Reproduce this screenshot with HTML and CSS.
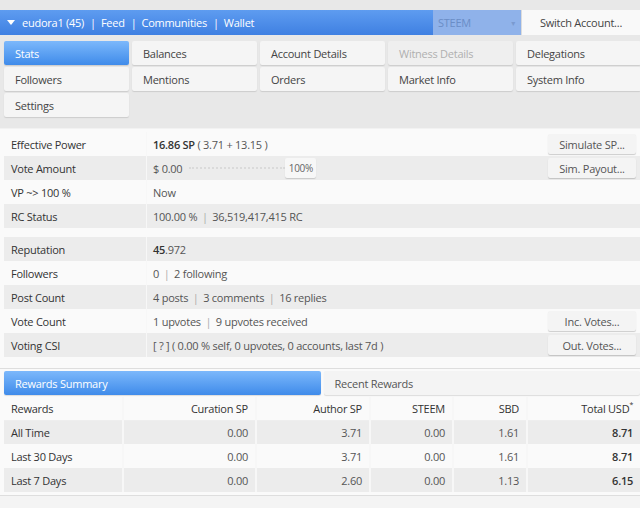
FILE: index.html
```html
<!DOCTYPE html>
<html>
<head>
<meta charset="utf-8">
<link rel="stylesheet" href="styles.css">
</head>
<body>
<div class="topbar">
  <div class="nav">
    <span class="caret"></span>
    <span class="link">eudora1 (45)</span><span class="sep">|</span>
    <span class="link">Feed</span><span class="sep">|</span>
    <span class="link">Communities</span><span class="sep">|</span>
    <span class="link">Wallet</span>
  </div>
  <div class="select"><span>STEEM</span><span class="arrow">▾</span></div>
  <div class="switch">Switch Account...</div>
</div>

<div class="tabs">
  <div class="tab active">Stats</div>
  <div class="tab">Balances</div>
  <div class="tab">Account Details</div>
  <div class="tab disabled">Witness Details</div>
  <div class="tab">Delegations</div>
  <div class="tab">Followers</div>
  <div class="tab">Mentions</div>
  <div class="tab">Orders</div>
  <div class="tab">Market Info</div>
  <div class="tab">System Info</div>
  <div class="tab">Settings</div>
</div>

<div class="panel stats">
  <div class="group">
    <div class="row">
      <div class="label">Effective Power</div>
      <div class="value"><b>16.86 SP</b> ( 3.71 + 13.15 )</div>
      <div class="act"><span class="btn">Simulate SP...</span></div>
    </div>
    <div class="row alt">
      <div class="label">Vote Amount</div>
      <div class="value"><span>$ 0.00</span><span class="slider"></span><span class="pct">100%</span></div>
      <div class="act"><span class="btn">Sim. Payout...</span></div>
    </div>
    <div class="row">
      <div class="label">VP ~&gt; 100 %</div>
      <div class="value">Now</div>
    </div>
    <div class="row alt">
      <div class="label">RC Status</div>
      <div class="value">100.00 % <span class="bar">|</span> 36,519,417,415 RC</div>
    </div>
  </div>
  <div class="group">
    <div class="row alt">
      <div class="label">Reputation</div>
      <div class="value"><b>45</b>.972</div>
    </div>
    <div class="row">
      <div class="label">Followers</div>
      <div class="value">0 <span class="bar">|</span> 2 following</div>
    </div>
    <div class="row alt">
      <div class="label">Post Count</div>
      <div class="value">4 posts <span class="bar">|</span> 3 comments <span class="bar">|</span> 16 replies</div>
    </div>
    <div class="row">
      <div class="label">Vote Count</div>
      <div class="value">1 upvotes <span class="bar">|</span> 9 upvotes received</div>
      <div class="act"><span class="btn">Inc. Votes...</span></div>
    </div>
    <div class="row alt">
      <div class="label">Voting CSI</div>
      <div class="value">[ ? ] ( 0.00 % self, 0 upvotes, 0 accounts, last 7d )</div>
      <div class="act"><span class="btn">Out. Votes...</span></div>
    </div>
  </div>
</div>

<div class="panel rewards">
  <div class="rtabs">
    <div class="rtab active">Rewards Summary</div>
    <div class="rtab">Recent Rewards</div>
  </div>
  <table class="rtable">
    <thead>
      <tr><th class="first">Rewards</th><th>Curation SP</th><th>Author SP</th><th>STEEM</th><th>SBD</th><th>Total USD<sup>*</sup></th></tr>
    </thead>
    <tbody>
      <tr class="alt"><td class="first">All Time</td><td>0.00</td><td>3.71</td><td>0.00</td><td>1.61</td><td class="total">8.71</td></tr>
      <tr><td class="first">Last 30 Days</td><td>0.00</td><td>3.71</td><td>0.00</td><td>1.61</td><td class="total">8.71</td></tr>
      <tr class="alt"><td class="first">Last 7 Days</td><td>0.00</td><td>2.60</td><td>0.00</td><td>1.13</td><td class="total">6.15</td></tr>
    </tbody>
  </table>
</div>
<div class="panel tail"></div>
</body>
</html>
```

FILE: styles.css
```css
* { box-sizing: border-box; }
html, body { margin: 0; padding: 0; }
body {
  background: #e8e8e8;
  font-family: "Open Sans", "DejaVu Sans", sans-serif;
  font-size: 11px;
  letter-spacing: -0.25px;
  color: #333;
  width: 640px;
  height: 508px;
  overflow: hidden;
}

/* top bar */
.topbar {
  margin-top: 10px;
  height: 25px;
  display: flex;
}
.nav {
  flex: 1;
  display: flex;
  align-items: center;
  padding-left: 7px;
  background: linear-gradient(#5e9cf0, #3f80e2);
  color: #fff;
  font-size: 11px;
}
.caret {
  width: 0; height: 0;
  border-left: 4px solid transparent;
  border-right: 4px solid transparent;
  border-top: 5px solid #fff;
  margin-right: 7px;
}
.sep { margin: 0 5px 0 6px; }
.select {
  width: 88px;
  background: #8fb2ea;
  color: #6a8dc6;
  font-size: 11px;
  display: flex;
  align-items: center;
  justify-content: space-between;
  padding: 0 6px 0 5px;
}
.select .arrow { font-size: 8px; color: #7a9ad0; }
.switch {
  width: 119px;
  background: #f9f9f9;
  color: #444;
  display: flex;
  align-items: center;
  justify-content: center;
  border-left: 1px solid #dcdcdc;
}

/* tabs */
.tabs {
  display: grid;
  grid-template-columns: repeat(5, 125px);
  grid-auto-rows: 24px;
  column-gap: 3px;
  row-gap: 2px;
  padding: 6px 0 0 4px;
}
.tab {
  background: #f5f5f5;
  color: #444;
  padding-left: 11px;
  display: flex;
  align-items: center;
  border-radius: 2px;
  box-shadow: 0 1px 1px rgba(0,0,0,0.12);
}
.tab.active {
  background: linear-gradient(#7cb8fb, #3f8bea);
  color: #fff;
}
.tab.disabled { color: #b0b0b0; background: #efefef; }

/* panels */
.panel {
  background: #fafafa;
}
.stats {
  margin-top: 11px;
  border-top: 1px solid #f2f2f2;
  padding: 3px 0 11px 4px;
}
.group + .group { margin-top: 9px; }
.row {
  display: flex;
  height: 24px;
  align-items: center;
}
.row.alt { background: #ececec; }
.label {
  width: 143px;
  padding-left: 7px;
  color: #333;
  height: 100%;
  display: flex;
  align-items: center;
  border-right: 1px solid #f7f7f7;
}
.value {
  flex: 1;
  padding-left: 6px;
  color: #555;
  display: flex;
  align-items: center;
  white-space: pre;
}
.value b { color: #333; font-weight: 600; }
.bar { color: #aaa; margin: 0 2px; }
.slider {
  width: 96px;
  margin-left: 7px;
  border-top: 2px dotted #dadada;
  height: 0;
}
.pct {
  font-size: 10px;
  color: #666;
  background: #f7f7f7;
  width: 31px;
  justify-content: center;
  height: 20px;
  display: flex;
  align-items: center;
  box-shadow: 0 1px 1px rgba(0,0,0,0.15);
  border-radius: 2px;
}
.act { padding-right: 4px; }
.btn {
  display: flex;
  align-items: center;
  justify-content: center;
  width: 88px;
  height: 20px;
  background: #f4f4f4;
  color: #555;
  font-size: 11px;
  border-radius: 2px;
  box-shadow: 0 1px 1px rgba(0,0,0,0.18);
}

/* rewards */
.rewards {
  border-top: 1px solid #dedede;
  padding: 2px 0 3px 4px;
  border-bottom: 1px solid #dedede;
}
.rtabs {
  display: flex;
  gap: 3px;
  height: 24px;
}
.rtab {
  flex: 1;
  background: #f4f4f4;
  color: #555;
  padding-left: 11px;
  display: flex;
  align-items: center;
  border-radius: 2px;
  box-shadow: 0 1px 1px rgba(0,0,0,0.12);
}
.rtab.active {
  background: linear-gradient(#7cb8fb, #3f8bea);
  color: #fff;
}
.rtable {
  margin-top: 2px;
  width: 636px;
  border-collapse: collapse;
  table-layout: fixed;
}
.rtable th, .rtable td {
  height: 24px;
  padding: 0 7px;
  text-align: right;
  font-weight: normal;
  border-left: 2px solid #f7f7f7;
  color: #555;
}
.rtable th { color: #333; background: #fafafa; border-bottom: 1px solid #eee; height: 23px; }
.rtable .first { text-align: left; border-left: none; color: #333; }
.rtable tr.alt td { background: #ececec; }
.rtable td.total { color: #333; font-weight: 600; }
.rtable th:nth-child(1) { width: 119px; }
.rtable th:nth-child(2) { width: 133px; }
.rtable th:nth-child(3) { width: 114px; }
.rtable th:nth-child(4) { width: 83px; }
.rtable th:nth-child(5) { width: 74px; }
.rtable th:nth-child(6) { width: 113px; }
sup { font-size: 7px; vertical-align: top; position: relative; top: -1px; }
.tail { height: 20px; background: #f4f4f4; }
```
